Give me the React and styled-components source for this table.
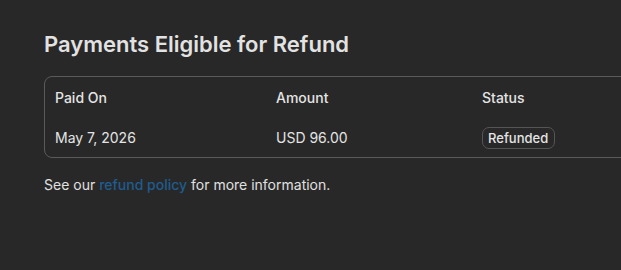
import React from "react";
import styled, { createGlobalStyle } from "styled-components";

const GlobalStyle = createGlobalStyle`
  html, body {
    margin: 0;
    background: #282828;
    overflow: hidden;
  }
  body {
    font-family: Inter, "Liberation Sans", sans-serif;
    color: #e4e4e4;
  }
`;

const Page = styled.div`
  padding: 30px 0 0 44px;
`;

const Title = styled.h2`
  margin: 0 0 18px;
  font-size: 22px;
  line-height: 28px;
  font-weight: 600;
  color: #e2e2e2;
`;

const Card = styled.div`
  width: 640px;
  border: 1px solid #5a5a5a;
  border-radius: 8px;
`;

const Row = styled.div`
  display: grid;
  grid-template-columns: 221px 206px 1fr;
  align-items: center;
  height: ${(p) => (p.head ? "41px" : "39px")};
  padding-left: 10px;
  font-size: 14px;
  font-weight: ${(p) => (p.head ? 500 : 400)};
`;

const Badge = styled.span`
  justify-self: start;
  display: inline-block;
  padding: 1px 6px 1px 5px;
  border: 1px solid #555;
  border-radius: 7px;
  font-size: 13px;
  font-weight: 500;
  line-height: 18px;
`;

const Note = styled.p`
  margin: 18px 0 0;
  font-size: 14px;
  color: #e0e0e0;
`;

const Link = styled.a`
  color: #1f5c8f;
  text-decoration: none;
  font-weight: 500;
`;

export default function App() {
  const payments = [{ date: "May 7, 2026", amount: "USD 96.00", status: "Refunded" }];
  return (
    <Page>
      <GlobalStyle />
      <Title>Payments Eligible for Refund</Title>
      <Card>
        <Row head>
          <span>Paid On</span>
          <span>Amount</span>
          <span>Status</span>
        </Row>
        {payments.map((p) => (
          <Row key={p.date}>
            <span>{p.date}</span>
            <span>{p.amount}</span>
            <Badge>{p.status}</Badge>
          </Row>
        ))}
      </Card>
      <Note>
        See our <Link href="#">refund policy</Link> for more information.
      </Note>
    </Page>
  );
}
